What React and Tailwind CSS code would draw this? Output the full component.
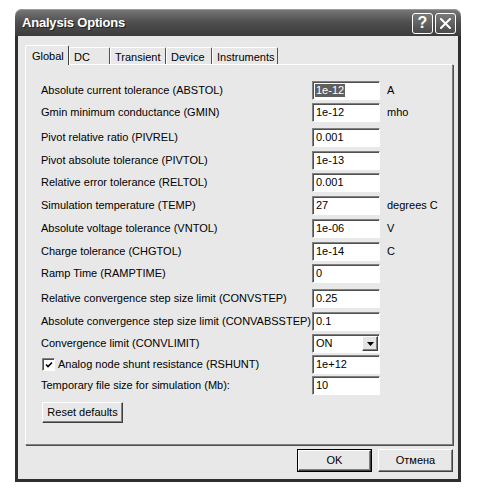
import React from "react";

const rows = [
  { label: "Absolute current tolerance (ABSTOL)", value: "1e-12", unit: "A", mt: "mt-[16px]", selected: true },
  { label: "Gmin minimum conductance (GMIN)", value: "1e-12", unit: "mho", mt: "mt-[3px]" },
  { label: "Pivot relative ratio (PIVREL)", value: "0.001", mt: "mt-[6px]" },
  { label: "Pivot absolute tolerance (PIVTOL)", value: "1e-13", mt: "mt-[4px]" },
  { label: "Relative error tolerance (RELTOL)", value: "0.001", mt: "mt-[3px]" },
  { label: "Simulation temperature (TEMP)", value: "27", unit: "degrees C", mt: "mt-[4px]" },
  { label: "Absolute voltage tolerance (VNTOL)", value: "1e-06", unit: "V", mt: "mt-[4px]" },
  { label: "Charge tolerance (CHGTOL)", value: "1e-14", unit: "C", mt: "mt-[4px]" },
  { label: "Ramp Time (RAMPTIME)", value: "0", mt: "mt-[3px]" },
  { label: "Relative convergence step size limit (CONVSTEP)", value: "0.25", mt: "mt-[6px]" },
  { label: "Absolute convergence step size limit (CONVABSSTEP)", value: "0.1", mt: "mt-[4px]" },
  { label: "Convergence limit (CONVLIMIT)", combo: "ON", mt: "mt-[3px]" },
  { label: "Analog node shunt resistance (RSHUNT)", value: "1e+12", check: true, mt: "mt-[2px]" },
  { label: "Temporary file size for simulation (Mb):", value: "10", mt: "mt-[2px]" },
];

const sunken =
  "border border-t-[#808080] border-l-[#808080] border-r-white border-b-white shadow-[inset_1px_1px_0_#505050]";
const raised =
  "border border-t-white border-l-white border-r-[#404040] border-b-[#404040] shadow-[inset_-1px_-1px_0_#808080]";

function Field({ value, selected }) {
  return (
    <div className={`w-[68px] h-[19px] bg-white flex items-center pl-[2px] ${sunken}`}>
      {selected ? (
        <span className="bg-[#5f5f5f] text-white px-px leading-[13px]">{value}</span>
      ) : (
        <span className="px-px leading-[13px]">{value}</span>
      )}
    </div>
  );
}

function Combo({ value }) {
  return (
    <div className={`w-[68px] h-[19px] bg-white flex items-center pl-[3px] ${sunken}`}>
      <span className="flex-1 leading-[13px]">{value}</span>
      <div className={`w-[16px] h-[15px] mr-px bg-[#e4e4e4] flex items-center justify-center ${raised}`}>
        <svg width="7" height="4" viewBox="0 0 7 4">
          <polygon points="0,0 7,0 3.5,4" fill="#000" />
        </svg>
      </div>
    </div>
  );
}

function Tab({ label, active, w }) {
  if (active) {
    return (
      <div
        className={`${w} h-[20px] -mb-px relative z-10 bg-[#e8e8e8] border-t border-l border-white border-r border-r-[#404040] rounded-t-[2px] flex items-start pt-[2px] pl-[6px]`}
      >
        {label}
      </div>
    );
  }
  return (
    <div
      className={`${w} h-[17px] bg-[#e8e8e8] border-t border-l border-white border-r border-r-[#505050] rounded-t-[2px] flex items-start pt-[1px] pl-[4px]`}
    >
      {label}
    </div>
  );
}

export default function App() {
  return (
    <div
      className="w-[489px] h-[498px] bg-white pt-[9px] pl-[15px] text-[11px] text-black"
      style={{ fontFamily: '"Liberation Sans", Arial, sans-serif' }}
    >
      <div className="w-[446px] flex flex-col">
        {/* Title bar */}
        <div className="h-[27px] rounded-t-[7px] bg-gradient-to-b from-[#7a7a7a] via-[#4e4e4e] to-[#3c3c3c] flex items-center pl-[7px] pr-[5px] shadow-[inset_0_1px_0_#9a9a9a]">
          <span className="flex-1 text-white font-bold text-[13px] tracking-[-0.2px] [text-shadow:1px_1px_0_#222]">
            Analysis Options
          </span>
          <div className="flex gap-[2px] mt-[1px]">
            <div className="w-[21px] h-[21px] rounded-[3px] border border-white bg-gradient-to-b from-[#7a7a7a] to-[#4a4a4a] flex items-center justify-center text-white font-bold text-[16px] leading-none">
              ?
            </div>
            <div className="w-[21px] h-[21px] rounded-[3px] border border-white bg-gradient-to-b from-[#7a7a7a] to-[#4a4a4a] flex items-center justify-center">
              <svg width="11" height="11" viewBox="0 0 11 11">
                <path d="M1 1 L10 10 M10 1 L1 10" stroke="#fff" strokeWidth="2" strokeLinecap="square" />
              </svg>
            </div>
          </div>
        </div>

        {/* Body */}
        <div className="h-[446px] bg-[#e8e8e8] border-x-[3px] border-b-[3px] border-[#2e2e2e] pt-[9px] pl-[7px] pr-[5px] flex flex-col">
          <div className="h-[19px] flex items-end">
            <Tab label="Global" active w="w-[44px]" />
            <Tab label="DC" w="w-[41px]" />
            <Tab label="Transient" w="w-[56px]" />
            <Tab label="Device" w="w-[46px]" />
            <Tab label="Instruments" w="w-[66px]" />
          </div>

          <div className="h-[381px] border-t border-l border-white border-r border-b border-r-[#808080] border-b-[#808080] shadow-[1px_1px_0_#505050] pl-[15px] flex flex-col">
            {rows.map((r, i) => (
              <div key={i} className={`flex items-center h-[19px] ${r.mt}`}>
                {r.check ? (
                  <div className="w-[271px] flex items-center">
                    <div className={`w-[13px] h-[13px] bg-white ml-px mr-[3px] flex items-center justify-center ${sunken}`}>
                      <svg width="8" height="8" viewBox="0 0 8 8">
                        <path d="M1 3.5 L3 5.5 L7 1.5" stroke="#000" strokeWidth="1.6" fill="none" />
                      </svg>
                    </div>
                    <span>{r.label}</span>
                  </div>
                ) : (
                  <span className="w-[271px]">{r.label}</span>
                )}
                {r.combo ? <Combo value={r.combo} /> : <Field value={r.value} selected={r.selected} />}
                {r.unit && <span className="ml-[7px]">{r.unit}</span>}
              </div>
            ))}
            <div className="mt-[7px] ml-px">
              <div className={`w-[81px] h-[21px] bg-[#e8e8e8] flex items-center justify-center ${raised}`}>
                Reset defaults
              </div>
            </div>
          </div>

          <div className="mt-[4px] flex justify-end gap-[6px]">
            <div className="w-[75px] h-[23px] border border-black">
              <div className={`w-full h-full bg-[#e8e8e8] flex items-center justify-center ${raised}`}>OK</div>
            </div>
            <div className={`w-[75px] h-[23px] bg-[#e8e8e8] flex items-center justify-center ${raised}`}>
              Отмена
            </div>
          </div>
        </div>
      </div>
    </div>
  );
}
